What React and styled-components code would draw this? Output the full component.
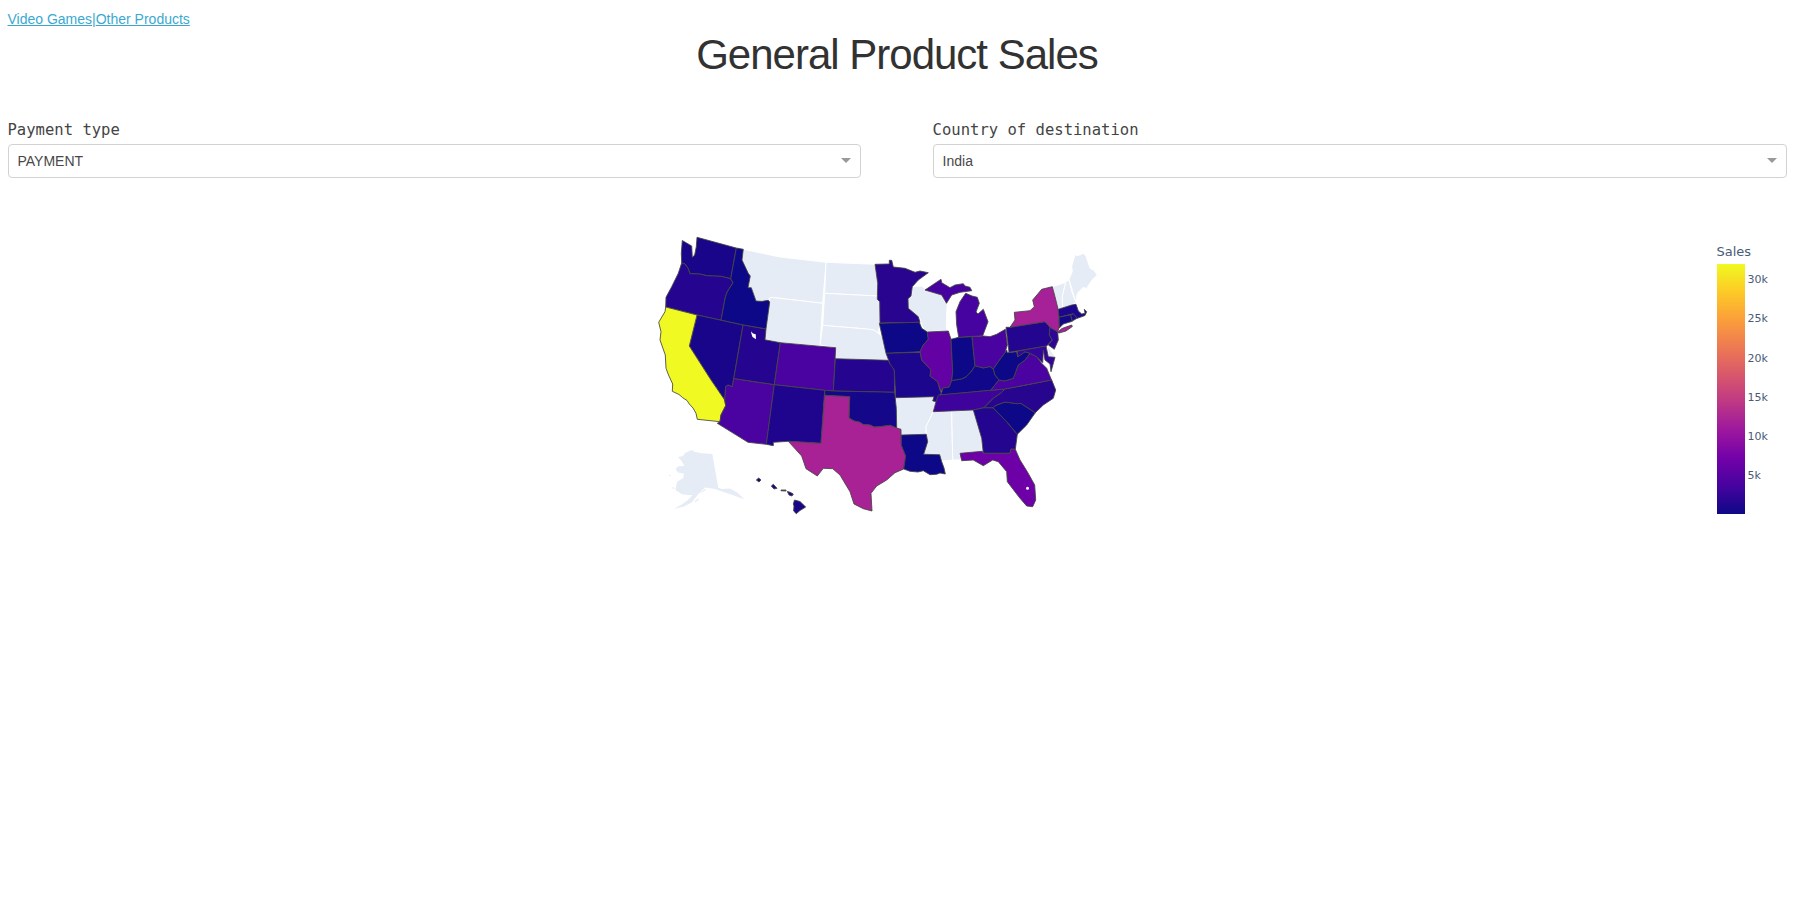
import React from "react";
import styled, { createGlobalStyle } from "styled-components";

const GlobalStyle = createGlobalStyle`
  body {
    margin: 0;
    background: #fff;
    color: #444;
    font-family: "Liberation Sans", Arial, sans-serif;
    font-size: 14px;
  }
`;

const Page = styled.main`
  padding: 7px 7.5px 0;
`;

const Nav = styled.nav`
  display: flex;
  height: 23px;
  line-height: 24px;
`;

const NavLink = styled.a`
  color: #3aa9cf;
  text-decoration: underline;
`;

const Title = styled.h1`
  margin: 0;
  height: 50px;
  line-height: 50px;
  font-size: 42px;
  font-weight: 400;
  letter-spacing: -1px;
  text-align: center;
  color: #323232;
`;

const Filters = styled.section`
  display: flex;
  justify-content: space-between;
  margin-top: 39px;
`;

const Field = styled.div`
  width: 48%;
`;

const Label = styled.div`
  height: 25px;
  line-height: 22px;
  font-family: "DejaVu Sans Mono", monospace;
  font-size: 15.55px;
`;

const Select = styled.div`
  box-sizing: border-box;
  display: flex;
  align-items: center;
  justify-content: space-between;
  height: 34px;
  padding: 0 9px 1px;
  border: 1px solid #d2d2d2;
  border-radius: 4px;
  color: #484848;
`;

const Arrow = styled.span`
  border: 5px solid transparent;
  border-top-color: #999;
  border-bottom-width: 0;
`;

const Graph = styled.section`
  display: flex;
  justify-content: space-between;
  margin-top: 47px;
  padding-left: 632.5px;
`;

const MapSvg = styled.svg`
  width: 470px;
  height: 300px;
  flex: none;
`;

const Legend = styled.aside`
  width: 70px;
  padding-top: 17px;
  font-family: "DejaVu Sans", sans-serif;
  color: #4a5b76;
`;

const LegendTitle = styled.div`
  height: 22px;
  line-height: 20px;
  font-size: 13px;
`;

const Scale = styled.div`
  display: flex;
  gap: 3px;
`;

const Bar = styled.div`
  width: 28px;
  height: 250px;
  background: linear-gradient(
    to top,
    #0d0887, #46039f, #7201a8, #9c179e, #bd3786,
    #d8576b, #ed7953, #fb9f3a, #fdca26, #f0f921
  );
`;

const Ticks = styled.div`
  margin-top: -4px;
  line-height: 39.3px;
  font-size: 11px;
`;

// Shapes with no sales figure.
const emptyStates = {
  MT: "743.3,249.3 780,257 826,262.3 822.7,303.3 780,298.3 770,297.3 768.3,300.3 756,301 751.3,287.7 748,287.7 750.3,276 742,260",
  ND: "826,262.3 875,264.3 877.7,283.3 877.7,296 824.7,293.3",
  SD: "824.7,293.3 877.7,296 877.3,299.3 879.7,301.7 880,323 878.3,333.3 874,330 866.7,329 822.7,325.3",
  NE: "822.7,325.3 866.7,329 874,330 878.3,333.3 882.3,336.7 888.3,360.3 835.3,358.7 835.7,347.7 820,345",
  WY: "770,297.3 780,298.3 822.7,303.3 820,346 780.3,342.7 765,339.3 766,329",
  WI: "912.3,286.7 915,286.7 921.7,286 926.7,290 941.7,295 945,301.7 947.3,302 946.7,315 946.7,330.7 925,331.7 921.7,325 920,318.3 908.3,308.3 907.7,299.3 911.7,295",
  AR: "895.7,397.7 934,396.7 932.3,401.7 936,401.7 933.3,411.7 926,426.7 926.3,434.3 901.3,435 901,429.3 896.7,428",
  MS: "933.3,411.7 951.7,411.3 952.7,460 941.7,461 939.7,454.7 923.7,454.3 927.7,441.7 926.3,434.3 926,426.7",
  AL: "951.7,411.3 973.3,410 981.7,438.3 982.3,451.3 960,453.3 960.7,460 952.7,460",
  DE: "1046.7,346 1049.3,347.3 1055,356.7 1049.3,356.7",
  VT: "1052.3,286.7 1065.7,282.3 1062.3,296.7 1062.7,308.3 1058.3,309.3 1055,296.7",
  NH: "1065.7,282.3 1066.7,280.7 1069,280.7 1072,292 1076,302.7 1071.7,305 1062.7,308.3 1062.3,296.7",
  ME: "1069,279.3 1072.3,271.7 1071.7,266 1075,255 1078,255.5 1083.3,253.3 1086,256 1090,268.3 1093.5,270 1097.3,275 1092,280 1086.7,288.3 1083,287.5 1077.3,293.3 1075.7,301.7",
};

const alaska =
  "678,457 683,456 685,453 691.7,450 695,452 701.7,453.3 712.3,454 718.3,487.7 722,489 730,488.5 738,493 744.5,499.5 734,495.5 725,492.5 715,489 705,487.5 698.3,494 691.7,502.5 684,506.5 674,509 684,503 689,499 692.5,495 688,495 681.7,494.3 675.5,490 677,481.7 683.3,478 684,473.5 678,472.5 675.5,469 678.3,466.3 684.3,466 681.7,461";

const salesStates = [
  ["WA", "#190589", "697,237.3 736.3,248 730.7,278.7 721,276.3 706.7,275.7 700,274 690,273.7 688.3,268.7 685,264 681.7,263 681.3,253.3 682.3,240.5 691.7,246 692.3,257.3 694.7,255 696.3,246.7"],
  ["OR", "#25058f", "681.7,263 685,264 688.3,268.7 690,273.7 700,274 706.7,275.7 721,276.3 730.7,278.7 733,282.7 727.3,291.7 725.3,297.3 721,320.2 697,315 665.7,307 666,297.3 671.7,286.7 678.3,273.3"],
  ["ID", "#0d0887", "736.3,248 743.3,249.3 742,260 748.3,273.3 750.3,276 748,287.7 751.3,287.7 756,301 762,301.3 768.3,300.3 769.7,302 766,329 743,325 721,320.2 725.3,297.3 727.3,291.7 733,282.7 730.7,278.7"],
  ["NV", "#190589", "697,315 721,320.2 743,325 733.7,378.7 732.3,386.7 728,385 725.7,386.7 724.7,400 711,380 689.3,346"],
  ["CA", "#f0f921", "665.7,307 697,315 689.3,346 711,380 724.7,400 725.7,405.7 721,415 720,421.7 697.3,419.3 696,413.3 693,408 689.3,404 687,400.5 682.7,397.7 679,394.5 672.3,391.3 672.7,384 668.5,375 666,368.3 665.3,355 660,340 661,331.7 658.7,322.3 665,311.7"],
  ["UT", "#25058f", "743,325 766,329 765,339.8 780.3,342.7 774.3,384.7 733.7,378.7"],
  ["CO", "#4a02a0", "780.3,342.7 835.7,347.7 833.3,391 824.7,390.3 774.3,384.7"],
  ["AZ", "#4a02a0", "733.7,378.7 774.3,384.7 766.3,444.3 748,442.3 717.3,423.3 720,421.7 721,415 725.7,405.7 724.7,400 725.7,386.7 728,385 732.3,386.7"],
  ["NM", "#1f058e", "774.3,384.7 824.7,390.3 821,443.3 788.3,441.3 773.3,442.3 773.3,445.7 766.3,444.3"],
  ["KS", "#25058f", "835.3,358.7 888.3,360.3 890,364 892.3,366.7 894.3,370 894.7,392.3 833.3,391"],
  ["OK", "#14078a", "824.7,390.3 833.3,391 894.7,392.3 896.3,408.3 896.7,428 890,425.3 880,426.7 874,427 870,425 863,424.5 860,422.3 854,421 849,418 849.7,396.7 824.7,395.3"],
  ["TX", "#a82296", "824.7,395.3 849.7,396.7 849,418 854,421 860,422.3 863,424.5 870,425 874,427 880,426.7 890,425.3 896.7,428 901,429.3 901.3,445 905.7,456 903.7,469 895,472.7 886.7,480 876.7,486 871,493.3 872,511 863.3,508.7 854,504 850,491.7 840,475 832.7,468.7 823.3,468.3 817.3,476 806,468.7 801.7,456 788.3,441.3 821,443.3"],
  ["LA", "#0d0887", "901.3,435 926.3,434.3 927.7,441.7 923.7,454.3 939.7,454.7 941.7,461.7 944,468 945.3,474 940,473 936.7,474.3 930,474.7 923.3,470.7 918,472 910,471.3 903.7,469 905.7,456 901.3,445"],
  ["MN", "#29058f", "875,264.3 889.3,264 889.3,260.3 891.7,260.3 893.3,267 905,268.3 915,272.3 920,271 928.3,272.7 918.3,280 912.3,286.7 911,296 908,298.7 908.3,308.3 918.3,316.7 920,322.3 880,323 879.7,301.7 877.3,299.3 877.7,283.3"],
  ["IA", "#0d0887", "879.3,323.3 919.3,322.3 921.7,328.3 927.3,332 928.3,339.3 923.3,345 920,351.7 886,353.3 882.3,336.7"],
  ["MO", "#1b068d", "886,353.3 920,352.3 921.7,360 931,370 930,376 937.7,381.7 940,390 941.3,393.3 938.3,396.7 936.7,401.7 932.7,401 934,396.7 895.7,397.7 894.3,370 890,364"],
  ["IL", "#6401a5", "927.3,332 948.3,331 951,339.3 952.7,371.7 951.7,380.7 949,387.3 943,388 941,391.5 937.7,381.7 930,376 931,370 921.7,360 920,351.7 923.3,345 928.3,339.3"],
  ["IN", "#0d0887", "951,339.3 958.7,337.3 972,336.7 975,365.7 971.7,371 966,377 961.7,379 951.7,380.7 952.7,371.7"],
  ["KY", "#10078a", "941.3,393.3 943,388 949,387.3 951.7,380.7 961.7,379 966,377 971.7,371 975,365.7 983.3,368 990,366.5 993.3,369 995,375 999,380 990.7,390.3 941.3,395"],
  ["OH", "#4a02a0", "972,336.7 983.3,336 990,336.7 996.7,334.3 1005.3,329.3 1007.3,345 1005,352.7 998.3,361.7 993.3,369 990,366.5 983.3,368 975,365.7"],
  ["MI-upper", "#46039f", "925,290 941,279.3 941.7,282.7 950,287.7 955,285 963.3,283.7 965,286 970,287.3 971.7,290.7 960,292.3 951.7,295 946.5,303.3 941.7,295"],
  ["MI-lower", "#46039f", "965.7,293.3 972,296 977.3,297.3 979.3,303.3 976,312 978,314 983.3,309.3 988,321.7 982.7,335.7 958.7,337.3 956.7,325 956,311.7 960,301.7"],
  ["TN", "#3e039c", "938.3,395 990.7,390.3 1005,389 1001,393 993.3,398.3 984,407.7 973.3,410 933.3,411.7 936,401.7"],
  ["GA", "#23058f", "973.3,410 984,407.7 993,407.7 1006.7,421.7 1017.3,434.3 1015.3,449.3 1011,449 1010,453.3 983.3,453.3 981.7,438.3"],
  ["FL", "#6e00a8", "960,453.3 982.3,451.3 983.3,453.3 1010,453.3 1011,449 1015.3,449.3 1020,460 1027.3,471.7 1034.7,485 1035.7,500 1032.7,506.7 1026.7,506 1020,498.3 1007.3,481.7 1006.7,471.7 998.3,461.7 992.7,460 983.3,465.7 973.3,460 961.7,460.7"],
  ["SC", "#0d0887", "993,407.7 996,405.3 1005,402 1017.3,403.7 1020.7,403.3 1035.3,412.7 1026.7,425 1017.3,434.3 1006.7,421.7"],
  ["NC", "#27058f", "1005,389 1051.7,380 1055.7,390 1053.3,398.3 1043.3,405 1035.3,412.7 1020.7,403.3 1017.3,403.7 1005,402 996,405.3 993,407.7 984,407.7 993.3,398.3 1001,393"],
  ["VA", "#4a02a0", "990.7,390.3 999,380 1005,381 1013.3,378.3 1018.3,365 1025,360 1030,353.3 1036.7,356.7 1041.7,363.3 1046.7,368.3 1051.5,380 1005,389"],
  ["WV", "#0d0887", "1006.7,350 1007.3,352.7 1016.7,351.7 1017.7,356.7 1025,351.7 1030,353.3 1025,360 1018.3,365 1013.3,378.3 1005,381 999,380 995,375 993.3,369 998.3,361.7 1005,352.7"],
  ["PA", "#23058f", "1006,327.3 1010,327.3 1045,321.7 1050,327.3 1049.3,335 1052.3,340 1046.7,346 1009,352.3"],
  ["MD", "#33059a", "1017,351.3 1046,346 1048.3,356.7 1055,357.3 1051,371.7 1050,364 1045,360 1043.3,350 1042.7,362.7 1036.7,356.7 1030,353.3 1025,351.7 1018,356.7"],
  ["NJ", "#2f0596", "1050,327.3 1057.7,331.7 1058.3,340 1054.3,349.3 1048.3,345 1052.3,340 1049.3,335"],
  ["NY", "#a62098", "1010,327.3 1015,320 1014.3,312.3 1030,310.7 1034.3,306.7 1032.7,300 1041.7,289.3 1052.3,286.7 1055,296.7 1058.3,310 1059.3,327.3 1057.7,331.7 1051.7,328.3 1045,321.7"],
  ["NY-island", "#a62098", "1057.7,332 1062,328.5 1071.7,325 1072.3,326.5 1066,331 1059,333"],
  ["MA", "#1b068d", "1058.3,309.3 1071.7,305 1076,304.3 1078.3,311 1081.7,314 1085,313.3 1084.3,309.3 1086.7,311.7 1085,315.5 1077.3,318.3 1073,313.8 1059,317.3"],
  ["CT", "#14078a", "1059,317.3 1070.7,314.7 1072.3,321.3 1063.3,324 1059.3,328"],
  ["RI", "#1b068d", "1070.7,314.7 1073.5,313.8 1077,318.3 1072.3,321"],
  ["HI-1", "#190589", "756.3,480 758.7,478 761,480 759,482"],
  ["HI-2", "#190589", "771.3,486 773.3,484.3 777,488.3 774,489"],
  ["HI-3", "#444444", "781,490 786,490 786,491 781,490.8"],
  ["HI-4", "#190589", "787.3,491.5 790,492.2 793.3,494 792,496 789,495"],
  ["HI-5", "#190589", "794.5,500 800,501.5 805.7,507 800,510.5 796.3,513.7 793.6,511 794,506 793.3,504"],
];

const ticks = ["30k", "25k", "20k", "15k", "10k", "5k"];

function SalesMap() {
  return (
    <MapSvg viewBox="640 225 470 300" role="img" aria-label="Sales by state">
      <g fill="#e5ecf6" stroke="#fff" strokeWidth="1" strokeLinejoin="round">
        {Object.entries(emptyStates).map(([id, points]) => (
          <polygon key={id} points={points} />
        ))}
      </g>
      <g fill="#e5ecf6">
        <polygon points={alaska} />
        <path d="M668 474l3 1.5-1 1zM672 487l3 1-2 1zM695 501l3-2.500 1 1-4 3zM700 493l5-4 1 1-5 3z" />
      </g>
      <g stroke="#444" strokeOpacity="0.85" strokeWidth="1" strokeLinejoin="round">
        {salesStates.map(([id, color, points]) => (
          <polygon key={id} points={points} fill={color} />
        ))}
      </g>
      <g fill="#fff">
        <polygon points="751,331.3 753,333.5 755.7,334.3 756,339.3 752.5,337 751.5,334" />
        <circle cx="1027.5" cy="488.2" r="1.5" />
      </g>
    </MapSvg>
  );
}

export default function App() {
  return (
    <Page>
      <GlobalStyle />
      <Nav>
        <NavLink href="#">Video Games</NavLink>
        <NavLink as="span">|</NavLink>
        <NavLink href="#">Other Products</NavLink>
      </Nav>
      <Title>General Product Sales</Title>
      <Filters>
        <Field>
          <Label>Payment type</Label>
          <Select>PAYMENT<Arrow /></Select>
        </Field>
        <Field>
          <Label>Country of destination</Label>
          <Select>India<Arrow /></Select>
        </Field>
      </Filters>
      <Graph>
        <SalesMap />
        <Legend>
          <LegendTitle>Sales</LegendTitle>
          <Scale>
            <Bar />
            <Ticks>
              {ticks.map((t) => (
                <div key={t}>{t}</div>
              ))}
            </Ticks>
          </Scale>
        </Legend>
      </Graph>
    </Page>
  );
}
